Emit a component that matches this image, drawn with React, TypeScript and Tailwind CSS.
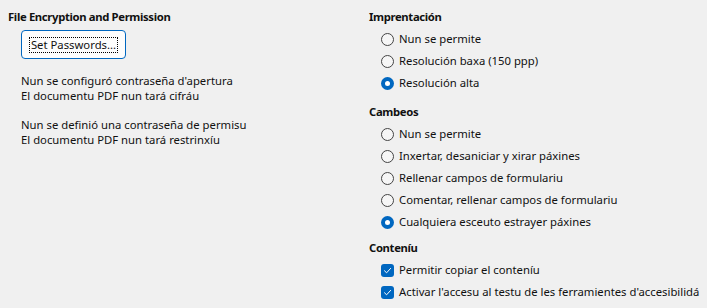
import React from "react";

function Radio({ checked, label }: { checked?: boolean; label: string }) {
  return (
    <div className="flex h-[22px] items-center whitespace-nowrap">
      <span className="ml-[12px] mr-[5px] flex h-[13px] w-[13px] items-center justify-center">
        {checked ? (
          <span className="flex h-[13px] w-[13px] items-center justify-center rounded-full bg-[#0067c0]">
            <span className="h-[5px] w-[5px] rounded-full bg-white" />
          </span>
        ) : (
          <span className="h-[13px] w-[13px] rounded-full border border-[#444] bg-[#f6f6f6]" />
        )}
      </span>
      <span>{label}</span>
    </div>
  );
}

function Check({ label }: { label: string }) {
  return (
    <div className="flex h-[22px] items-center whitespace-nowrap">
      <span className="ml-[12px] mr-[5px] flex h-[13px] w-[13px] items-center justify-center rounded-[3px] bg-[#0067c0]">
        <svg width="9" height="9" viewBox="0 0 9 9" fill="none">
          <path d="M1.5 4.8 L3.6 6.8 L7.6 2.4" stroke="white" strokeWidth="1" strokeLinecap="round" strokeLinejoin="round" />
        </svg>
      </span>
      <span>{label}</span>
    </div>
  );
}

export default function App() {
  return (
    <div
      className="flex h-[308px] w-[707px] bg-[#f0f0f0] text-[11.3px] text-[#111]"
      style={{ fontFamily: '"Noto Sans", sans-serif' }}
    >
      {/* left column */}
      <div className="w-[369px] pl-2 pt-[9px]">
        <div className="h-4 leading-4 font-bold tracking-[-0.35px]">File Encryption and Permission</div>
        <div className="ml-[13px] mt-[5px] flex h-[29px] w-[105px] items-center justify-center rounded-[4px] border border-[#0067c0] bg-[#fdfdfd]">
          <span className="border border-dotted border-black px-px leading-[14px]">Set Passwords...</span>
        </div>
        <div className="ml-[13px] mt-[14px] leading-[15px]">
          <div>Nun se configuró contraseña d'apertura</div>
          <div>El documentu PDF nun tará cifráu</div>
        </div>
        <div className="ml-[13px] mt-[14px] leading-[15px]">
          <div>Nun se definió una contraseña de permisu</div>
          <div>El documentu PDF nun tará restrinxíu</div>
        </div>
      </div>

      {/* right column */}
      <div className="flex-1 pt-[9px]">
        <div className="h-4 leading-4 font-bold tracking-[-0.35px]">Imprentación</div>
        <div className="mt-[3px]">
          <Radio label="Nun se permite" />
          <Radio label="Resolución baxa (150 ppp)" />
          <Radio checked label="Resolución alta" />
        </div>
        <div className="mt-[10px] h-4 leading-4 font-bold tracking-[-0.35px]">Cambeos</div>
        <div className="mt-[3px]">
          <Radio label="Nun se permite" />
          <Radio label="Inxertar, desaniciar y xirar páxines" />
          <Radio label="Rellenar campos de formulariu" />
          <Radio label="Comentar, rellenar campos de formulariu" />
          <Radio checked label="Cualquiera esceuto estrayer páxines" />
        </div>
        <div className="mt-[7px] h-4 leading-4 font-bold tracking-[-0.35px]">Conteníu</div>
        <div className="mt-[3px]">
          <Check label="Permitir copiar el conteníu" />
          <Check label="Activar l'accesu al testu de les ferramientes d'accesibilidá" />
        </div>
      </div>
    </div>
  );
}
